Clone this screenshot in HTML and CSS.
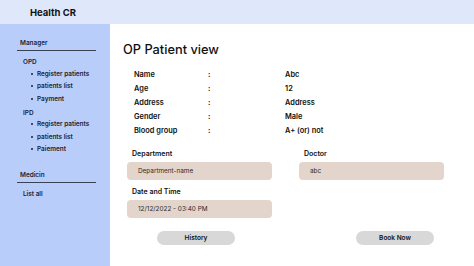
FILE: index.html
```html
<!DOCTYPE html>
<html>
<head>
<meta charset="utf-8">
<link rel="stylesheet" href="styles.css">
</head>
<body>
<header class="topbar"><span class="brand">Health CR</span></header>
<div class="layout">
  <nav class="sidebar">
    <div class="section-title">Manager</div>
    <div class="rule"></div>
    <div class="group">OPD</div>
    <ul class="links">
      <li>Register patients</li>
      <li>patients list</li>
      <li>Payment</li>
    </ul>
    <div class="group">IPD</div>
    <ul class="links">
      <li>Register patients</li>
      <li>patients list</li>
      <li>Paiement</li>
    </ul>
    <div class="section-title second">Medicin</div>
    <div class="rule"></div>
    <div class="group">List all</div>
  </nav>
  <main class="content">
    <h1 class="title">OP Patient view</h1>
    <div class="details">
      <span>Name</span><span>:</span><span>Abc</span>
      <span>Age</span><span>:</span><span>12</span>
      <span>Address</span><span>:</span><span>Address</span>
      <span>Gender</span><span>:</span><span>Male</span>
      <span>Blood group</span><span>:</span><span>A+ (or) not</span>
    </div>
    <div class="fields">
      <div class="field">
        <label>Department</label>
        <div class="box">Department-name</div>
      </div>
      <div class="field">
        <label>Doctor</label>
        <div class="box">abc</div>
      </div>
      <div class="field">
        <label>Date and Time</label>
        <div class="box">12/12/2022 - 03:40 PM</div>
      </div>
    </div>
    <div class="actions">
      <button class="btn">History</button>
      <button class="btn">Book Now</button>
    </div>
  </main>
</div>
</body>
</html>
```
FILE: styles.css
```css
* { box-sizing: border-box; }
html, body { margin: 0; padding: 0; }
body {
  width: 474px;
  height: 266px;
  overflow: hidden;
  font-family: Inter, "Noto Sans", sans-serif;
  color: #111;
  background: #fff;
  display: flex;
  flex-direction: column;
}
.topbar {
  height: 24px;
  flex: none;
  background: #dfe7fb;
  display: flex;
  align-items: center;
  padding-left: 30px;
}
.brand {
  font-size: 9.5px;
  font-weight: 700;
  color: #111;
}
.layout {
  flex: 1;
  display: flex;
}
.sidebar {
  width: 110px;
  flex: none;
  background: #b9cdfb;
  padding: 14px 0 0 17px;
  font-size: 6.4px;
  font-weight: 600;
  color: #1a1f33;
}
.section-title {
  padding-left: 3px;
  line-height: 10px;
}
.section-title.second { margin-top: 16px; }
.rule {
  width: 79px;
  height: 1px;
  background: #3b4256;
  margin: 2px 0 6px;
}
.group {
  padding-left: 6px;
  line-height: 10px;
  margin-bottom: 1.5px;
}
.links {
  list-style: none;
  margin: 0 0 4px;
  padding: 0 0 0 14px;
}
.links li {
  position: relative;
  line-height: 10px;
  margin-bottom: 2.5px;
  padding-left: 6px;
}
.links li::before {
  content: "";
  position: absolute;
  left: 0;
  top: 4px;
  width: 2px;
  height: 2px;
  border-radius: 50%;
  background: #1a1f33;
}
.content {
  flex: 1;
  padding: 0 30px 0 13px;
}
.title {
  margin: 17px 0 0;
  font-size: 12.8px;
  font-weight: 500;
  line-height: 18px;
  color: #111;
}
.details {
  margin: 11px 0 0 11px;
  display: grid;
  grid-template-columns: 74px 77px auto;
  row-gap: 4px;
  font-size: 7.4px;
  font-weight: 600;
  line-height: 10px;
}
.fields {
  margin-top: 13px;
  display: grid;
  grid-template-columns: 145px 145px;
  column-gap: 27px;
  row-gap: 7px;
  padding-left: 4px;
}
.field label {
  display: block;
  font-size: 7px;
  font-weight: 600;
  line-height: 10px;
  padding-left: 5px;
  margin-bottom: 3px;
}
.box {
  height: 18px;
  border-radius: 4px;
  background: #e3d5cb;
  font-size: 6.4px;
  line-height: 18px;
  padding-left: 11px;
  color: #2a2a2a;
}
.actions {
  margin-top: 13px;
  display: flex;
  justify-content: space-between;
  padding: 0 10px 0 34px;
}
.btn {
  width: 78px;
  height: 14px;
  border: none;
  border-radius: 7px;
  background: #d8d8d8;
  font-family: Inter, "Noto Sans", sans-serif;
  font-size: 6.5px;
  font-weight: 600;
  color: #111;
  padding: 0;
}
```
